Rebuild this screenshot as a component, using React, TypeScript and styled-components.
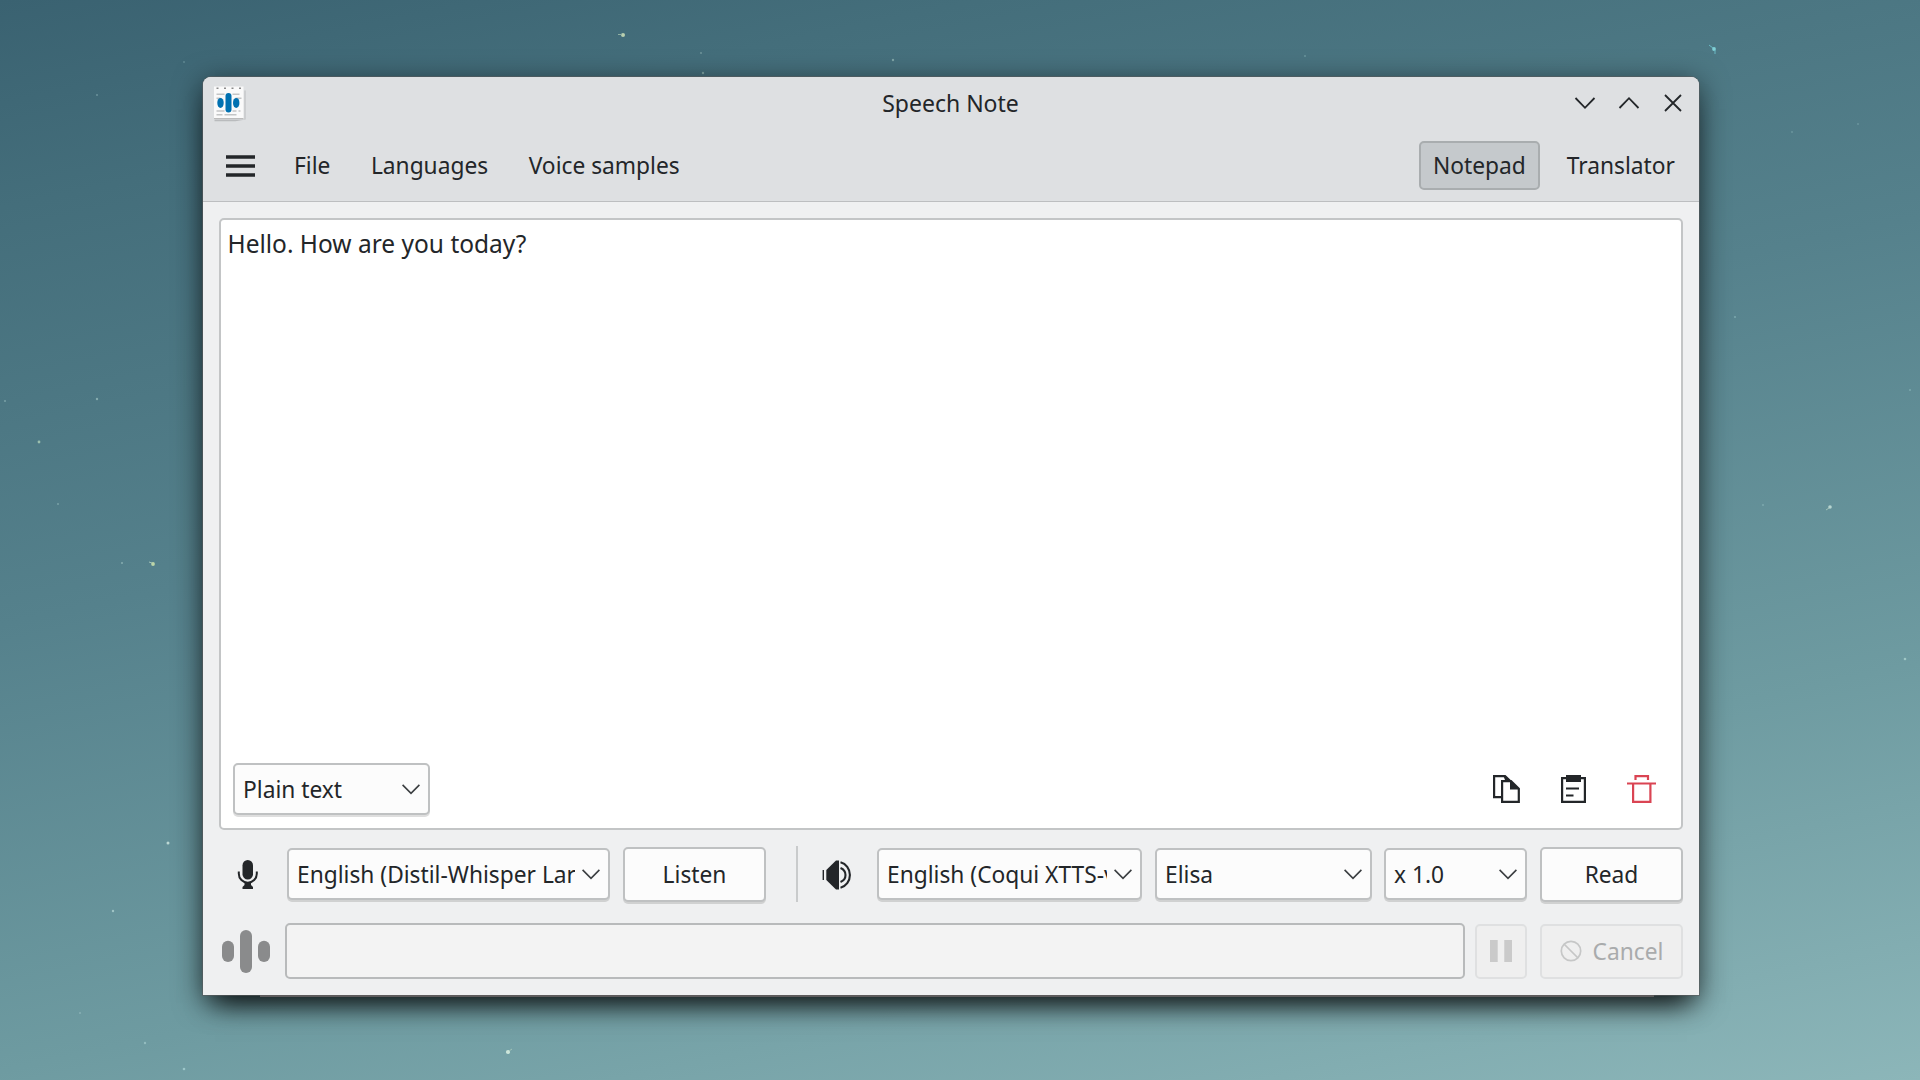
import React from "react";
import styled, { createGlobalStyle, css } from "styled-components";

const GlobalStyle = createGlobalStyle`
  *, *::before, *::after { box-sizing: border-box; }
  html, body { margin: 0; padding: 0; }
  body { width: 1920px; height: 1080px; overflow: hidden; }
  button { font: inherit; color: inherit; margin: 0; }
`;

const Desktop = styled.main`
  position: relative;
  width: 1920px;
  height: 1080px;
  padding: 77px 0 0 203px;
  overflow: hidden;
  font-family: "Noto Sans", sans-serif;
  font-size: 22.75px;
  line-height: 32px;
  color: #232629;
  background: linear-gradient(168deg, #3a6271 0%, #446e7b 14%, #55818c 42%, #6e9ba1 72%, #8cb6b9 100%);
`;

const Stars = styled.svg`
  position: absolute;
  inset: 0;
`;

const Window = styled.section`
  position: relative;
  display: flex;
  flex-direction: column;
  width: 1496px;
  height: 918px;
  border-radius: 8px 8px 0 0;
  background: #eff0f1;
  box-shadow: 0 0 0 1px rgba(90, 92, 94, 0.6), 0 6px 28px 1px rgba(0, 0, 0, 0.55), 0 20px 26px -12px rgba(0, 0, 0, 0.75);
`;

const Header = styled.header`
  height: 125px;
  border-bottom: 1px solid #bcbec0;
  border-radius: 8px 8px 0 0;
  background: #dee0e2;
`;

const TitleBar = styled.div`
  display: grid;
  grid-template-columns: 132px 1fr 132px;
  align-items: center;
  height: 51px;
  padding: 0 4px 0 11px;
`;

const Title = styled.h1`
  margin: 0;
  padding-right: 8px;
  font-size: 23px;
  font-weight: 400;
  text-align: center;
`;

const WindowButtons = styled.div`
  display: flex;
  justify-content: flex-end;
`;

const WindowButton = styled.button`
  display: flex;
  align-items: center;
  justify-content: center;
  width: 44px;
  height: 44px;
  padding: 0;
  border: 0;
  background: none;
`;

const MenuBar = styled.nav`
  display: flex;
  align-items: center;
  height: 74px;
  padding: 0 0 0 10px;
`;

const MenuButton = styled.button<{ $active?: boolean }>`
  height: 49px;
  padding: 2px 13px 0;
  border: 1px solid transparent;
  border-radius: 5px;
  background: none;
  white-space: nowrap;
  ${(p) =>
    p.$active &&
    css`
      border: 2px solid #a9adaf;
      padding: 2px 12px 0;
      background: #c5c9cc;
    `}
`;

const Hamburger = styled(MenuButton)`
  display: flex;
  align-items: center;
  width: 55px;
  padding: 2px 12px 0;
  margin-right: 12px;
`;

const MenuGroup = styled.div<{ $end?: boolean }>`
  display: flex;
  gap: ${(p) => (p.$end ? 13 : 12.5)}px;
  ${(p) => p.$end && "margin-left: auto; padding-right: 10px;"}
`;

const Content = styled.div`
  display: flex;
  flex-direction: column;
  padding: 16px 16px 0 16px;
`;

const Editor = styled.div`
  display: flex;
  flex-direction: column;
  justify-content: space-between;
  height: 612px;
  padding: 6px 12px 13px 12px;
  border: 2px solid #c3c5c6;
  border-radius: 5px;
  background: #fff;
`;

const Note = styled.p`
  margin: 0 0 0 -5.5px;
  font-size: 24.5px;
  line-height: 36px;
`;

const EditorTools = styled.div`
  display: flex;
  align-items: center;
  justify-content: space-between;
`;

const ToolIcons = styled.div`
  display: flex;
  gap: 39px;
  padding-right: 12px;
`;

const control = css`
  border: 2px solid #bfc1c2;
  border-radius: 5px;
  background: #fcfcfc;
  box-shadow: 0 2px 0 rgba(0, 0, 0, 0.13);
`;

const Combo = styled.div<{ $width: number }>`
  ${control}
  display: flex;
  align-items: center;
  justify-content: space-between;
  flex: none;
  width: ${(p) => p.$width}px;
  height: 52px;
  padding: 0 8px 0 8px;
`;

const ComboText = styled.span`
  overflow: hidden;
  white-space: nowrap;
  flex: 1;
  margin-right: 7px;
  padding-top: 2px;
`;

const PushButton = styled.button<{ $width: number }>`
  ${control}
  display: flex;
  align-items: center;
  justify-content: center;
  flex: none;
  width: ${(p) => p.$width}px;
  height: 55px;
  padding: 0;
  &:disabled {
    border-color: #dfe0e1;
    background: #efefef;
    box-shadow: none;
    color: #a9abac;
  }
`;

const ButtonLabel = styled.span`
  padding-top: 2px;
`;

const ControlRow = styled.div`
  display: flex;
  align-items: center;
  height: 56px;
  margin-top: 16px;
`;

const IconSlot = styled.div<{ $width: number }>`
  display: flex;
  align-items: center;
  justify-content: center;
  flex: none;
  width: ${(p) => p.$width}px;
  padding-top: 1px;
`;

const Spacer = styled.div<{ $size: number }>`
  flex: none;
  width: ${(p) => p.$size}px;
`;

const Divider = styled.div`
  width: 2px;
  height: 56px;
  background: #c9cbcc;
`;

const StatusRow = styled(ControlRow)`
  margin-top: 21px;
`;

const StatusField = styled.div`
  width: 1180px;
  height: 56px;
  border: 2px solid #b8babb;
  border-radius: 5px;
  background: #f3f3f3;
`;

const CancelLabel = styled(ButtonLabel)`
  margin-left: 11px;
`;

const BaseLine = styled.div`
  position: absolute;
  top: 918px;
  left: 57px;
  width: 1394px;
  height: 2px;
  background: #5d5b5c;
`;

const Chevron = ({ up }: { up?: boolean }) => (
  <svg width="22" height="14" viewBox="0 0 22 14" fill="none" stroke="#232629" strokeWidth="1.8">
    <path d={up ? "M1.5 12 11 2.2 20.5 12" : "M1.5 2 11 11.8 20.5 2"} />
  </svg>
);

const ComboArrow = () => (
  <svg width="18" height="12" viewBox="0 0 18 12" fill="none" stroke="#3b3e41" strokeWidth="1.6">
    <path d="M.6 1.9 9 10.300l8.400-8.400" />
  </svg>
);

const NoteLogo = () => (
  <svg width="34" height="38" viewBox="0.5 -2.5 34 38">
    <path d="M1 33h30V4h1v29l-10 1.700H1z" fill="#b9bbbd" />
    <path d="M.5 0h29.500v32.500H.5z" fill="#fafafa" />
    <path d="M.5 32h29.500" stroke="#bcbcbc" />
    <path d="M3 1.800h2M10.500 1.800h2M18 1.800h2M25.500 1.800h2" stroke="#8b8b8b" strokeWidth="1.400" />
    <path d="M3 7.800h8M19 7.800h7M3 11.700h4M22 11.700h6M3 24.400h8M19 24.400h4M25 24.400h2M3 28.200h6M11 28.200h12" stroke="#c4c5c6" strokeWidth="1.500" />
    <ellipse cx="7" cy="16.400" rx="3.200" ry="5" fill="#0071b1" />
    <rect x="12" y="6.500" width="6" height="19.500" rx="3" fill="#0071b1" />
    <ellipse cx="22.700" cy="16.400" rx="3.200" ry="5" fill="#0071b1" />
  </svg>
);

const CopyIcon = () => (
  <svg width="28" height="28" viewBox="0 0 28 28" fill="none" stroke="#232629" strokeWidth="2.2">
    <path d="M8 22.200H1.100V1.100H11" />
    <path d="M9.100 6.200H18l7.800 7.600V26.900H9.100z" />
    <path d="M10 0h2.500l5.500 5.200H8V5h4zM17 5.200l9.800 9.300H17z" fill="#232629" stroke="none" />
  </svg>
);

const PasteIcon = () => (
  <svg width="28" height="28" viewBox="0 0 28 28" fill="none" stroke="#232629" strokeWidth="2.2">
    <path d="M2.100 3.200h22.800v23.700H2.100z" />
    <path d="M6 0h15v7H6z" fill="#232629" stroke="none" />
    <path d="M6 13.500h13M6 20.500h7.500" strokeWidth="2" />
  </svg>
);

const TrashIcon = () => (
  <svg width="30" height="28" viewBox="0 0 30 28" fill="none" stroke="#da4453" strokeWidth="2.200">
    <path d="M0 8.500h29M6.100 9v17.900h17.300V9M8.500 5V1.200h12.500V5" />
  </svg>
);

const MicIcon = () => (
  <svg width="22" height="30" viewBox="0 0 22 30" fill="#232629">
    <rect x="5.500" y="0" width="10.500" height="19.500" rx="5.250" />
    <path d="M1.800 11.500v2.200a9 9 0 0 0 18 0v-2.200" fill="none" stroke="#232629" strokeWidth="2" />
    <path d="M7.500 22h6.500v3l2 2v2h-10.500v-2l2-2z" />
  </svg>
);

const SpeakerIcon = () => (
  <svg width="30" height="30" viewBox="0 0 30 30" fill="none" stroke="#232629">
    <path d="M1.300 10v10" strokeWidth="1.400" />
    <path d="M4.300 10 14 .5h3v29h-3L4.300 20z" fill="#232629" stroke="none" />
    <path d="M18.500 2.200c5.500 1.500 9.400 6.500 9.400 12.800s-3.900 11.300-9.400 12.800" strokeWidth="2.100" />
    <path d="M18.500 8c3.200 1.300 5 4 5 7s-1.800 5.700-5 7" strokeWidth="2.100" />
  </svg>
);

const WaveIcon = () => (
  <svg width="48" height="43" viewBox="0 0 48 43" fill="#8a8b8c">
    <rect x="0" y="10.700" width="12" height="21.300" rx="6" />
    <rect x="18" y="0" width="12" height="43" rx="6" />
    <rect x="36" y="10.700" width="12" height="21.300" rx="6" />
  </svg>
);

const stars = [
  [623, 35, 2, "#b9cfae"], [701, 53, 1, "#6f969b"], [893, 60, 1.2, "#7fa5a7"], [1714, 49, 1.9, "#7fd0d6"],
  [184, 62, 1, "#5f8792"], [97, 95, 1, "#6b929b"], [97, 399, 1.2, "#86acaf"], [39, 442, 1.4, "#9bbfae"],
  [5, 401, 1, "#78a0a6"], [153, 564, 1.9, "#bcd5a8"], [122, 563, 1, "#86acaf"], [58, 504, 1, "#78a0a6"],
  [168, 843, 1.5, "#bcd8d4"], [113, 911, 1.2, "#a0c4c5"], [508, 1052, 2.1, "#cde6da"], [1830, 507, 1.8, "#b7d5d0"],
  [1905, 659, 1.3, "#9fc7c5"], [1910, 390, 1, "#7da8ae"], [1735, 317, 1, "#7da8ae"], [1763, 505, 1, "#7da8ae"],
  [1792, 132, 1, "#6a949d"], [1858, 124, 1, "#6a949d"], [1305, 56, 1, "#6a949d"], [703, 73, 1.2, "#7ea3a4"],
  [80, 1013, 1, "#88b0b4"], [145, 1043, 1.2, "#93bcbf"], [184, 1069, 1.3, "#9cc6c9"],
] as const;

const Wallpaper = () => (
  <Stars width="1920" height="1080" viewBox="0 0 1920 1080">
    {stars.map(([x, y, r, color]) => (
      <circle key={`${x}-${y}`} cx={x} cy={y} r={r} fill={color} />
    ))}
    <path d="M618 34.500h4" stroke="#8fb0a4" />
    <path d="M1709 45l4 3M1715 50v4" stroke="#6bb9c4" />
    <path d="M149 562l3 1M1826 510l3-2M512 1049l-3 2" stroke="#a3c4b8" />
  </Stars>
);

const Select = ({ width, children }: { width: number; children: React.ReactNode }) => (
  <Combo $width={width}>
    <ComboText>{children}</ComboText>
    <ComboArrow />
  </Combo>
);

export default function App() {
  return (
    <>
      <GlobalStyle />
      <Desktop>
        <Wallpaper />
        <Window>
          <Header>
            <TitleBar>
              <NoteLogo />
              <Title>Speech Note</Title>
              <WindowButtons>
                <WindowButton aria-label="Minimize"><Chevron /></WindowButton>
                <WindowButton aria-label="Maximize"><Chevron up /></WindowButton>
                <WindowButton aria-label="Close">
                  <svg width="18" height="18" viewBox="0 0 18 18" stroke="#232629" strokeWidth="1.8">
                    <path d="m1 1 16 16M17 1 1 17" />
                  </svg>
                </WindowButton>
              </WindowButtons>
            </TitleBar>
            <MenuBar>
              <Hamburger aria-label="Menu">
                <svg width="29" height="22" viewBox="0 0 29 22" stroke="#232629" strokeWidth="3.6">
                  <path d="M0 2h29M0 11h29M0 20h29" />
                </svg>
              </Hamburger>
              <MenuGroup>
                <MenuButton>File</MenuButton>
                <MenuButton>Languages</MenuButton>
                <MenuButton>Voice samples</MenuButton>
              </MenuGroup>
              <MenuGroup $end>
                <MenuButton $active>Notepad</MenuButton>
                <MenuButton>Translator</MenuButton>
              </MenuGroup>
            </MenuBar>
          </Header>
          <Content>
            <Editor>
              <Note>Hello. How are you today?</Note>
              <EditorTools>
                <Select width={197}>Plain text</Select>
                <ToolIcons>
                  <CopyIcon />
                  <PasteIcon />
                  <TrashIcon />
                </ToolIcons>
              </EditorTools>
            </Editor>
            <ControlRow>
              <IconSlot $width={57}><MicIcon /></IconSlot>
              <Spacer $size={11} />
              <Select width={323}>English (Distil-Whisper Lar</Select>
              <Spacer $size={13} />
              <PushButton $width={143}><ButtonLabel>Listen</ButtonLabel></PushButton>
              <Spacer $size={30} />
              <Divider />
              <Spacer $size={10} />
              <IconSlot $width={57}><SpeakerIcon /></IconSlot>
              <Spacer $size={12} />
              <Select width={265}>English (Coqui XTTS-v</Select>
              <Spacer $size={13} />
              <Select width={217}>Elisa</Select>
              <Spacer $size={12} />
              <Select width={143}>x 1.0</Select>
              <Spacer $size={13} />
              <PushButton $width={143}><ButtonLabel>Read</ButtonLabel></PushButton>
            </ControlRow>
            <StatusRow>
              <IconSlot $width={54}><WaveIcon /></IconSlot>
              <Spacer $size={12} />
              <StatusField />
              <Spacer $size={10} />
              <PushButton $width={52} disabled aria-label="Pause">
                <svg width="22" height="22" viewBox="0 0 22 22" fill="#cacaca">
                  <path d="M0 0h7.700v22H0zM14.300 0H22v22h-7.700z" />
                </svg>
              </PushButton>
              <Spacer $size={13} />
              <PushButton $width={143} disabled>
                <svg width="22" height="22" viewBox="0 0 22 22" fill="none" stroke="#c6c7c7" strokeWidth="1.700">
                  <circle cx="11" cy="11" r="9.700" />
                  <path d="m4 4 14 14" />
                </svg>
                <CancelLabel>Cancel</CancelLabel>
              </PushButton>
            </StatusRow>
          </Content>
          <BaseLine />
        </Window>
      </Desktop>
    </>
  );
}
